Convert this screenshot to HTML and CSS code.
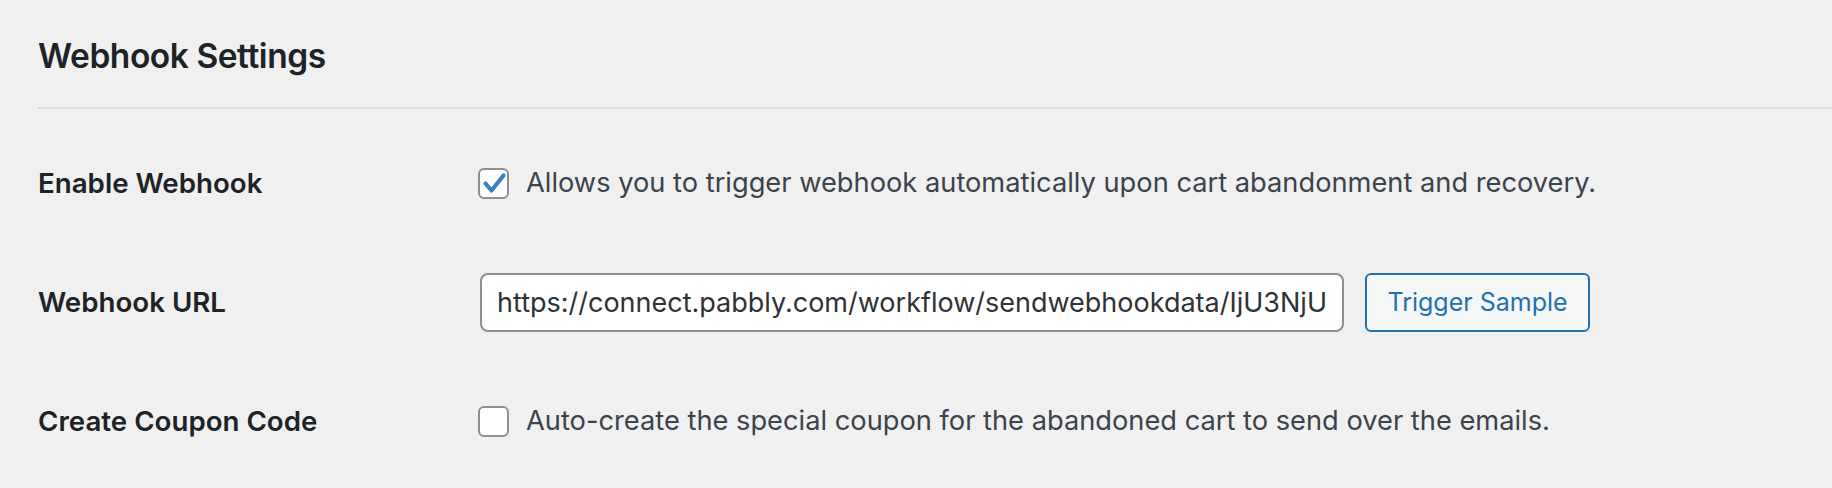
FILE: index.html
```html
<!DOCTYPE html>
<html lang="en">
<head>
<meta charset="utf-8">
<title>Webhook Settings</title>
<link rel="stylesheet" href="styles.css">
</head>
<body>
<div class="wrap">
  <h2 class="title">Webhook Settings</h2>
  <hr class="sep">
  <div class="rows">
    <div class="row">
      <div class="label">Enable Webhook</div>
      <div class="field">
        <span class="checkbox checked">
          <svg viewBox="0 0 31 31" width="31" height="31" aria-hidden="true"><path d="M7.5 15.5 L13.5 22.5 L25.5 7.5" fill="none" stroke="#3582c4" stroke-width="4.2" stroke-linecap="round" stroke-linejoin="round"/></svg>
        </span>
        <span class="desc">Allows you to trigger webhook automatically upon cart abandonment and recovery.</span>
      </div>
    </div>
    <div class="row">
      <div class="label">Webhook URL</div>
      <div class="field">
        <input class="text-input" type="text" value="https://connect.pabbly.com/workflow/sendwebhookdata/IjU3NjU">
        <button class="button" type="button">Trigger Sample</button>
      </div>
    </div>
    <div class="row">
      <div class="label">Create Coupon Code</div>
      <div class="field">
        <span class="checkbox"></span>
        <span class="desc">Auto-create the special coupon for the abandoned cart to send over the emails.</span>
      </div>
    </div>
  </div>
</div>
</body>
</html>
```

FILE: styles.css
```css
html, body {
  margin: 0;
  padding: 0;
  background: #f0f0f1;
}
body {
  font-family: Inter, "Noto Sans", "Liberation Sans", sans-serif;
  color: #1d2327;
}
.wrap {
  padding-left: 38px;
  padding-top: 36px;
}
.title {
  margin: 0;
  font-size: 33.5px;
  line-height: 40px;
  font-weight: 600;
  color: #1d2327;
  letter-spacing: -0.45px;
}
.sep {
  margin: 31px 0 0 0;
  border: 0;
  height: 2px;
  background: #dcdcde;
}
.rows {
  display: flex;
  flex-direction: column;
  gap: 59px;
  padding-top: 44px;
}
.row {
  display: flex;
  align-items: center;
  min-height: 60px;
}
.label {
  width: 440px;
  flex: 0 0 440px;
  font-size: 27.7px;
  line-height: 40px;
  font-weight: 600;
  color: #1d2327;
}
.field {
  display: flex;
  align-items: center;
}
.checkbox {
  box-sizing: border-box;
  width: 31px;
  height: 31px;
  border: 2px solid #8c8f94;
  border-radius: 6px;
  background: #fff;
  display: flex;
  align-items: center;
  justify-content: center;
  margin-right: 17px;
  flex: 0 0 auto;
}
.checkbox svg {
  display: block;
  margin: -2px;
}
.desc {
  font-size: 27.25px;
  line-height: 40px;
  color: #3c434a;
}
.text-input {
  box-sizing: border-box;
  width: 864px;
  height: 59px;
  border: 2px solid #8c8f94;
  border-radius: 8px;
  background: #fff;
  padding: 0 15px;
  font-family: Inter, "Noto Sans", "Liberation Sans", sans-serif;
  font-size: 27px;
  color: #2c3338;
  margin: 0 21px 0 2px;
}
.button {
  box-sizing: border-box;
  height: 59px;
  width: 225px;
  border: 2px solid #2271b1;
  border-radius: 6px;
  background: #f6f7f7;
  color: #2271b1;
  font-family: Inter, "Noto Sans", "Liberation Sans", sans-serif;
  font-size: 25px;
  padding: 0;
}
```
